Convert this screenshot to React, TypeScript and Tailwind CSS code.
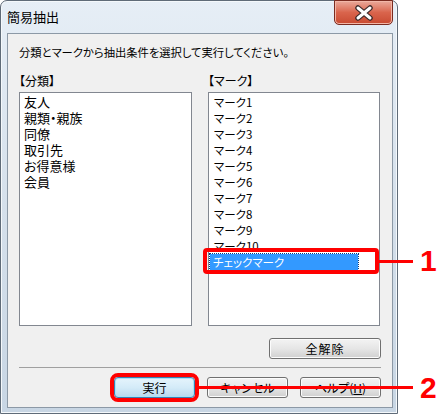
import React from 'react';

const jp = "font-['Noto_Sans_CJK_JP','Noto_Sans',sans-serif] [font-feature-settings:'palt']";

const bunrui = ['友人', '親類・親族', '同僚', '取引先', 'お得意様', '会員'];
const marks = ['マーク1', 'マーク2', 'マーク3', 'マーク4', 'マーク5', 'マーク6', 'マーク7', 'マーク8', 'マーク9', 'マーク10'];

const Btn: React.FC<{ label: React.ReactNode; primary?: boolean; className?: string }> = ({ label, primary, className }) => (
  <button
    className={
      'h-[21px] rounded-[3px] border text-[12px] leading-none text-black ' +
      (primary
        ? 'border-[#3c7fb1] bg-gradient-to-b from-[#e5f4fc] via-[#d4ebf8] to-[#b9d9ee] shadow-[inset_0_0_0_1px_#a8e2f7] '
        : 'border-[#707070] bg-gradient-to-b from-[#f3f3f3] via-[#e6e6e6] to-[#d0d0d0] shadow-[inset_0_0_0_1px_#fcfcfc] ') +
      (className ?? '')
    }
  >
    {label}
  </button>
);

const App: React.FC = () => {
  return (
    <div className={`relative w-[440px] h-[415px] bg-white overflow-hidden ${jp}`}>
      {/* window frame */}
      <div className="w-[398px] h-[414px] rounded-t-[7px] border border-[#5f6b78] bg-gradient-to-b from-[#e6eef6] via-[#d5e0eb] to-[#c8d6e4] flex flex-col shadow-[inset_0_0_0_1px_#f4f8fb]">
        {/* title bar */}
        <div className="h-[32px] flex items-start justify-between">
          <div className="pl-[6px] pt-[8px] text-[13px] leading-[16px] text-black">簡易抽出</div>
          <div className="mr-[4px] mt-[-1px] w-[59px] h-[25px] rounded-b-[5px] border border-[#7a2b20] bg-gradient-to-b from-[#e9a99b] via-[#d9644c] to-[#c94a31] shadow-[inset_0_0_0_1px_#f2b7a8] flex items-center justify-center">
            <svg width="22" height="16" viewBox="0 0 22 16">
              <path d="M5 3 L17 13 M17 3 L5 13" stroke="#3b2a2a" strokeWidth="5.5" strokeLinecap="round" />
              <path d="M5 3 L17 13 M17 3 L5 13" stroke="#ffffff" strokeWidth="3" strokeLinecap="round" />
            </svg>
          </div>
        </div>

        {/* client area */}
        <div className="ml-[6px] mr-[4px] h-[375px] border border-[#8c99a6] bg-[#f0f0f0] flex flex-col px-[11px]">
          <div className="pt-[11px] text-[11.3px] leading-[14px] text-black">分類とマークから抽出条件を選択して実行してください。</div>

          <div className="mt-[15px] flex gap-[16px]">
            <div className="flex flex-col">
              <div className="text-[12px] leading-[14px] text-black">【分類】</div>
              <div className="mt-[4px] w-[173px] h-[234px] border border-[#828790] bg-white pt-[1px] pl-[4px]">
                {bunrui.map((b) => (
                  <div key={b} className="h-[16px] text-[13px] leading-[16px] text-black">
                    {b}
                  </div>
                ))}
              </div>
            </div>
            <div className="flex flex-col">
              <div className="text-[12px] leading-[14px] text-black">【マーク】</div>
              <div className="mt-[4px] w-[172px] h-[234px] border border-[#828790] bg-white pt-[1px] pl-[1px]">
                {marks.map((m) => (
                  <div key={m} className="h-[16px] pl-[4px] text-[11.5px] leading-[16px] text-black">
                    {m}
                  </div>
                ))}
                <div className="h-[16px] w-[148px] pl-[3px] bg-[#3399ff] outline outline-1 outline-dotted outline-[#0b3b7a] text-[11.5px] leading-[16px] text-white">
                  チェックマーク
                </div>
              </div>
            </div>
          </div>

          <div className="mt-[12px] flex justify-end">
            <Btn label="全解除" className="w-[112px] tracking-[1px]" />
          </div>

          <div className="mt-[8px] border-t border-[#a0a0a0]" />

          <div className="mt-[9px] flex justify-end gap-[12px]">
            <Btn label="実行" primary className="w-[81px] outline-[4px] outline outline-[#ff0000] rounded-[4px]" />
            <Btn label="キャンセル" className="w-[81px]" />
            <Btn
              label={
                <span>
                  ヘルプ(<span className="underline">H</span>)
                </span>
              }
              className="w-[81px]"
            />
          </div>
        </div>
      </div>

      {/* annotation 1 */}
      <div className="absolute left-[203px] top-[248px] w-[176px] h-[26px] border-[4px] border-[#ff0000] rounded-[4px]" />
      <div className="absolute left-[378px] top-[260px] w-[35px] h-[3px] bg-[#ff0000]" />
      <div className="absolute left-[420px] top-[246px] font-['Liberation_Sans',sans-serif] font-bold text-[30px] leading-[30px] text-[#ff0000]">1</div>

      {/* annotation 2 */}
      <div className="absolute left-[197px] top-[386px] w-[216px] h-[3px] bg-[#ff0000]" />
      <div className="absolute left-[420px] top-[373px] font-['Liberation_Sans',sans-serif] font-bold text-[30px] leading-[30px] text-[#ff0000]">2</div>
    </div>
  );
};

export default App;
